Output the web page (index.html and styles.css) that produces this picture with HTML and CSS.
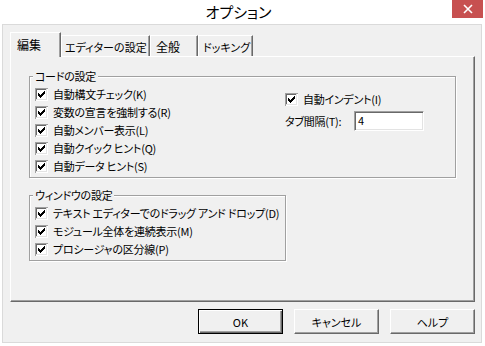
FILE: index.html
```html
<!DOCTYPE html>
<html lang="ja">
<head>
  <meta charset="UTF-8">
  <title>オプション</title>
  <link rel="stylesheet" href="styles.css">
</head>
<body>
<svg class="defs" width="0" height="0">
  <symbol id="cb" viewBox="0 0 13 13">
    <rect width="13" height="13" fill="#fff"/>
    <path d="M0 0h13v1H0zM0 0h1v13H0z" fill="#a0a0a0"/>
    <path d="M1 1h11v1H1zM1 1h1v11H1z" fill="#696969"/>
    <path d="M1 11h11v1H1zM11 1h1v11h-1z" fill="#e3e3e3"/>
    <path d="M3 5h1v3H3zM4 6h1v3H4zM5 7h1v3H5zM6 6h1v3H6zM7 5h1v3H7zM8 4h1v3H8zM9 3h1v3H9z" fill="#000"/>
  </symbol>
</svg>
<!--タイトルバー-->
<div class="titlebar">
  オプション
  <span class="close"><svg width="10" height="10" viewBox="0 0 10 10"><path d="M1 1l8 8M9 1l-8 8" stroke="#fff" stroke-width="1.6"/></svg></span>
</div>
<div class="window">
  <!--タブ-->
  <div class="tabs">
    <span class="tab tab-edit current">編集</span>
    <span class="tab tab-editor">エディターの設定</span>
    <span class="tab tab-general">全般</span>
    <span class="tab tab-dock">ドッキング</span>
  </div>
  <div class="panel">
    <fieldset class="group group-code">
      <legend>コードの設定</legend>
      <div class="group-body">
        <div class="col-left">
          <label class="row"><svg class="cb"><use href="#cb"/></svg>自動構文チェック(K)</label>
          <label class="row"><svg class="cb"><use href="#cb"/></svg>変数の宣言を強制する(R)</label>
          <label class="row"><svg class="cb"><use href="#cb"/></svg>自動メンバー表示(L)</label>
          <label class="row"><svg class="cb"><use href="#cb"/></svg>自動クイック ヒント(Q)</label>
          <label class="row"><svg class="cb"><use href="#cb"/></svg>自動データ ヒント(S)</label>
        </div>
        <div class="col-right">
          <label class="row"><svg class="cb"><use href="#cb"/></svg>自動インデント(I)</label>
          <div class="field">
            <span class="field-label">タブ間隔(T):</span>
            <span class="textbox">4</span>
          </div>
        </div>
      </div>
    </fieldset>
    <fieldset class="group group-window">
      <legend>ウィンドウの設定</legend>
      <div class="group-body">
        <div class="col-left">
          <label class="row"><svg class="cb"><use href="#cb"/></svg>テキスト エディターでのドラッグ アンド ドロップ(D)</label>
          <label class="row"><svg class="cb"><use href="#cb"/></svg>モジュール全体を連続表示(M)</label>
          <label class="row"><svg class="cb"><use href="#cb"/></svg>プロシージャの区分線(P)</label>
        </div>
      </div>
    </fieldset>
  </div>
  <!--ボタン-->
  <div class="buttons">
    <button class="btn default">OK</button>
    <button class="btn">キャンセル</button>
    <button class="btn">ヘルプ</button>
  </div>
</div>
</body>
</html>
```
FILE: styles.css
```css
* {
  margin: 0;
  padding: 0;
  box-sizing: border-box;
}
body {
  width: 485px;
  height: 346px;
  background-color: #fff;
  font-family: "Noto Sans CJK JP", "Liberation Sans", sans-serif;
  font-size: 11px;
  font-feature-settings: "palt";
  letter-spacing: -0.25px;
  color: #000;
  overflow: hidden;
}
.defs {
  position: absolute;
}
.titlebar {
  position: relative;
  height: 24px;
  line-height: 24px;
  text-align: center;
  font-size: 15px;
  letter-spacing: 0;
  padding-right: 8px;
}
.close {
  position: absolute;
  top: 0;
  right: 2px;
  width: 31px;
  height: 18px;
  background-color: #c75050;
  display: flex;
  align-items: center;
  justify-content: center;
}
.close svg {
  display: block;
}
.window {
  height: 319px;
  margin: 0 3px 0 2px;
  border: 1px solid #dadada;
  background-color: #f0f0f0;
  padding: 7px 6px 8px 7px;
}
.tabs {
  display: flex;
  align-items: flex-end;
  height: 24px;
}
.tab {
  height: 21px;
  line-height: 18px;
  padding: 2px 0 0 3px;
  border-top: 1px solid #fff;
  border-left: 1px solid #fff;
  border-right: 1px solid #696969;
  box-shadow: inset -1px 0 #a0a0a0;
  white-space: nowrap;
  font-size: 12px;
  letter-spacing: 0;
}
.tab.current {
  position: relative;
  z-index: 1;
  height: 25px;
  margin-bottom: -1px;
  padding: 3px 0 0 6px;
  background-color: #f0f0f0;
}
.tab-edit {
  width: 51px;
}
.tab-editor {
  width: 89px;
  font-size: 11px;
}
.tab-general {
  width: 48px;
  padding-left: 5px;
}
.tab-dock {
  width: 55px;
  padding-left: 4px;
  font-size: 11px;
}
.panel {
  height: 246px;
  border-top: 1px solid #fff;
  border-left: 1px solid #fff;
  border-right: 1px solid #696969;
  border-bottom: 1px solid #696969;
  box-shadow: inset -1px -1px #a0a0a0;
  padding: 12px 0 0 18px;
}
.group {
  border: 1px solid #a0a0a0;
  box-shadow: inset 1px 1px #fff, 1px 1px #fff;
  padding: 2px 0 2px 5px;
  min-width: 0;
}
.group legend {
  line-height: 14px;
  padding: 0 2px;
  margin-left: -2px;
  background-color: #f0f0f0;
}
.group-code {
  width: 427px;
}
.group-window {
  width: 257px;
  margin-top: 10px;
}
.group-body {
  display: flex;
}
.col-left {
  width: 250px;
}
.col-right {
  padding-top: 5px;
}
.row {
  display: flex;
  align-items: center;
  height: 18px;
  gap: 5px;
  white-space: nowrap;
}
.cb {
  width: 13px;
  height: 13px;
  flex: none;
}
.field {
  display: flex;
  align-items: center;
  margin-top: 3px;
}
.field-label {
  width: 69px;
}
.textbox {
  width: 70px;
  height: 20px;
  line-height: 16px;
  padding-left: 3px;
  background-color: #fff;
  border: 1px solid;
  border-color: #a0a0a0 #fff #fff #a0a0a0;
  box-shadow: inset 1px 1px #696969, inset -1px -1px #e3e3e3;
}
.buttons {
  display: flex;
  justify-content: flex-end;
  gap: 11px;
  margin-top: 7px;
}
.btn {
  width: 85px;
  height: 25px;
  font: inherit;
  letter-spacing: 0;
  color: #000;
  background-color: #f0f0f0;
  border: 1px solid;
  border-color: #fff #696969 #696969 #fff;
  box-shadow: inset -1px -1px #a0a0a0;
}
.btn.default {
  border-color: #000;
  box-shadow: inset 1px 1px #fff, inset -1px -1px #696969, inset -2px -2px #a0a0a0;
}
```
